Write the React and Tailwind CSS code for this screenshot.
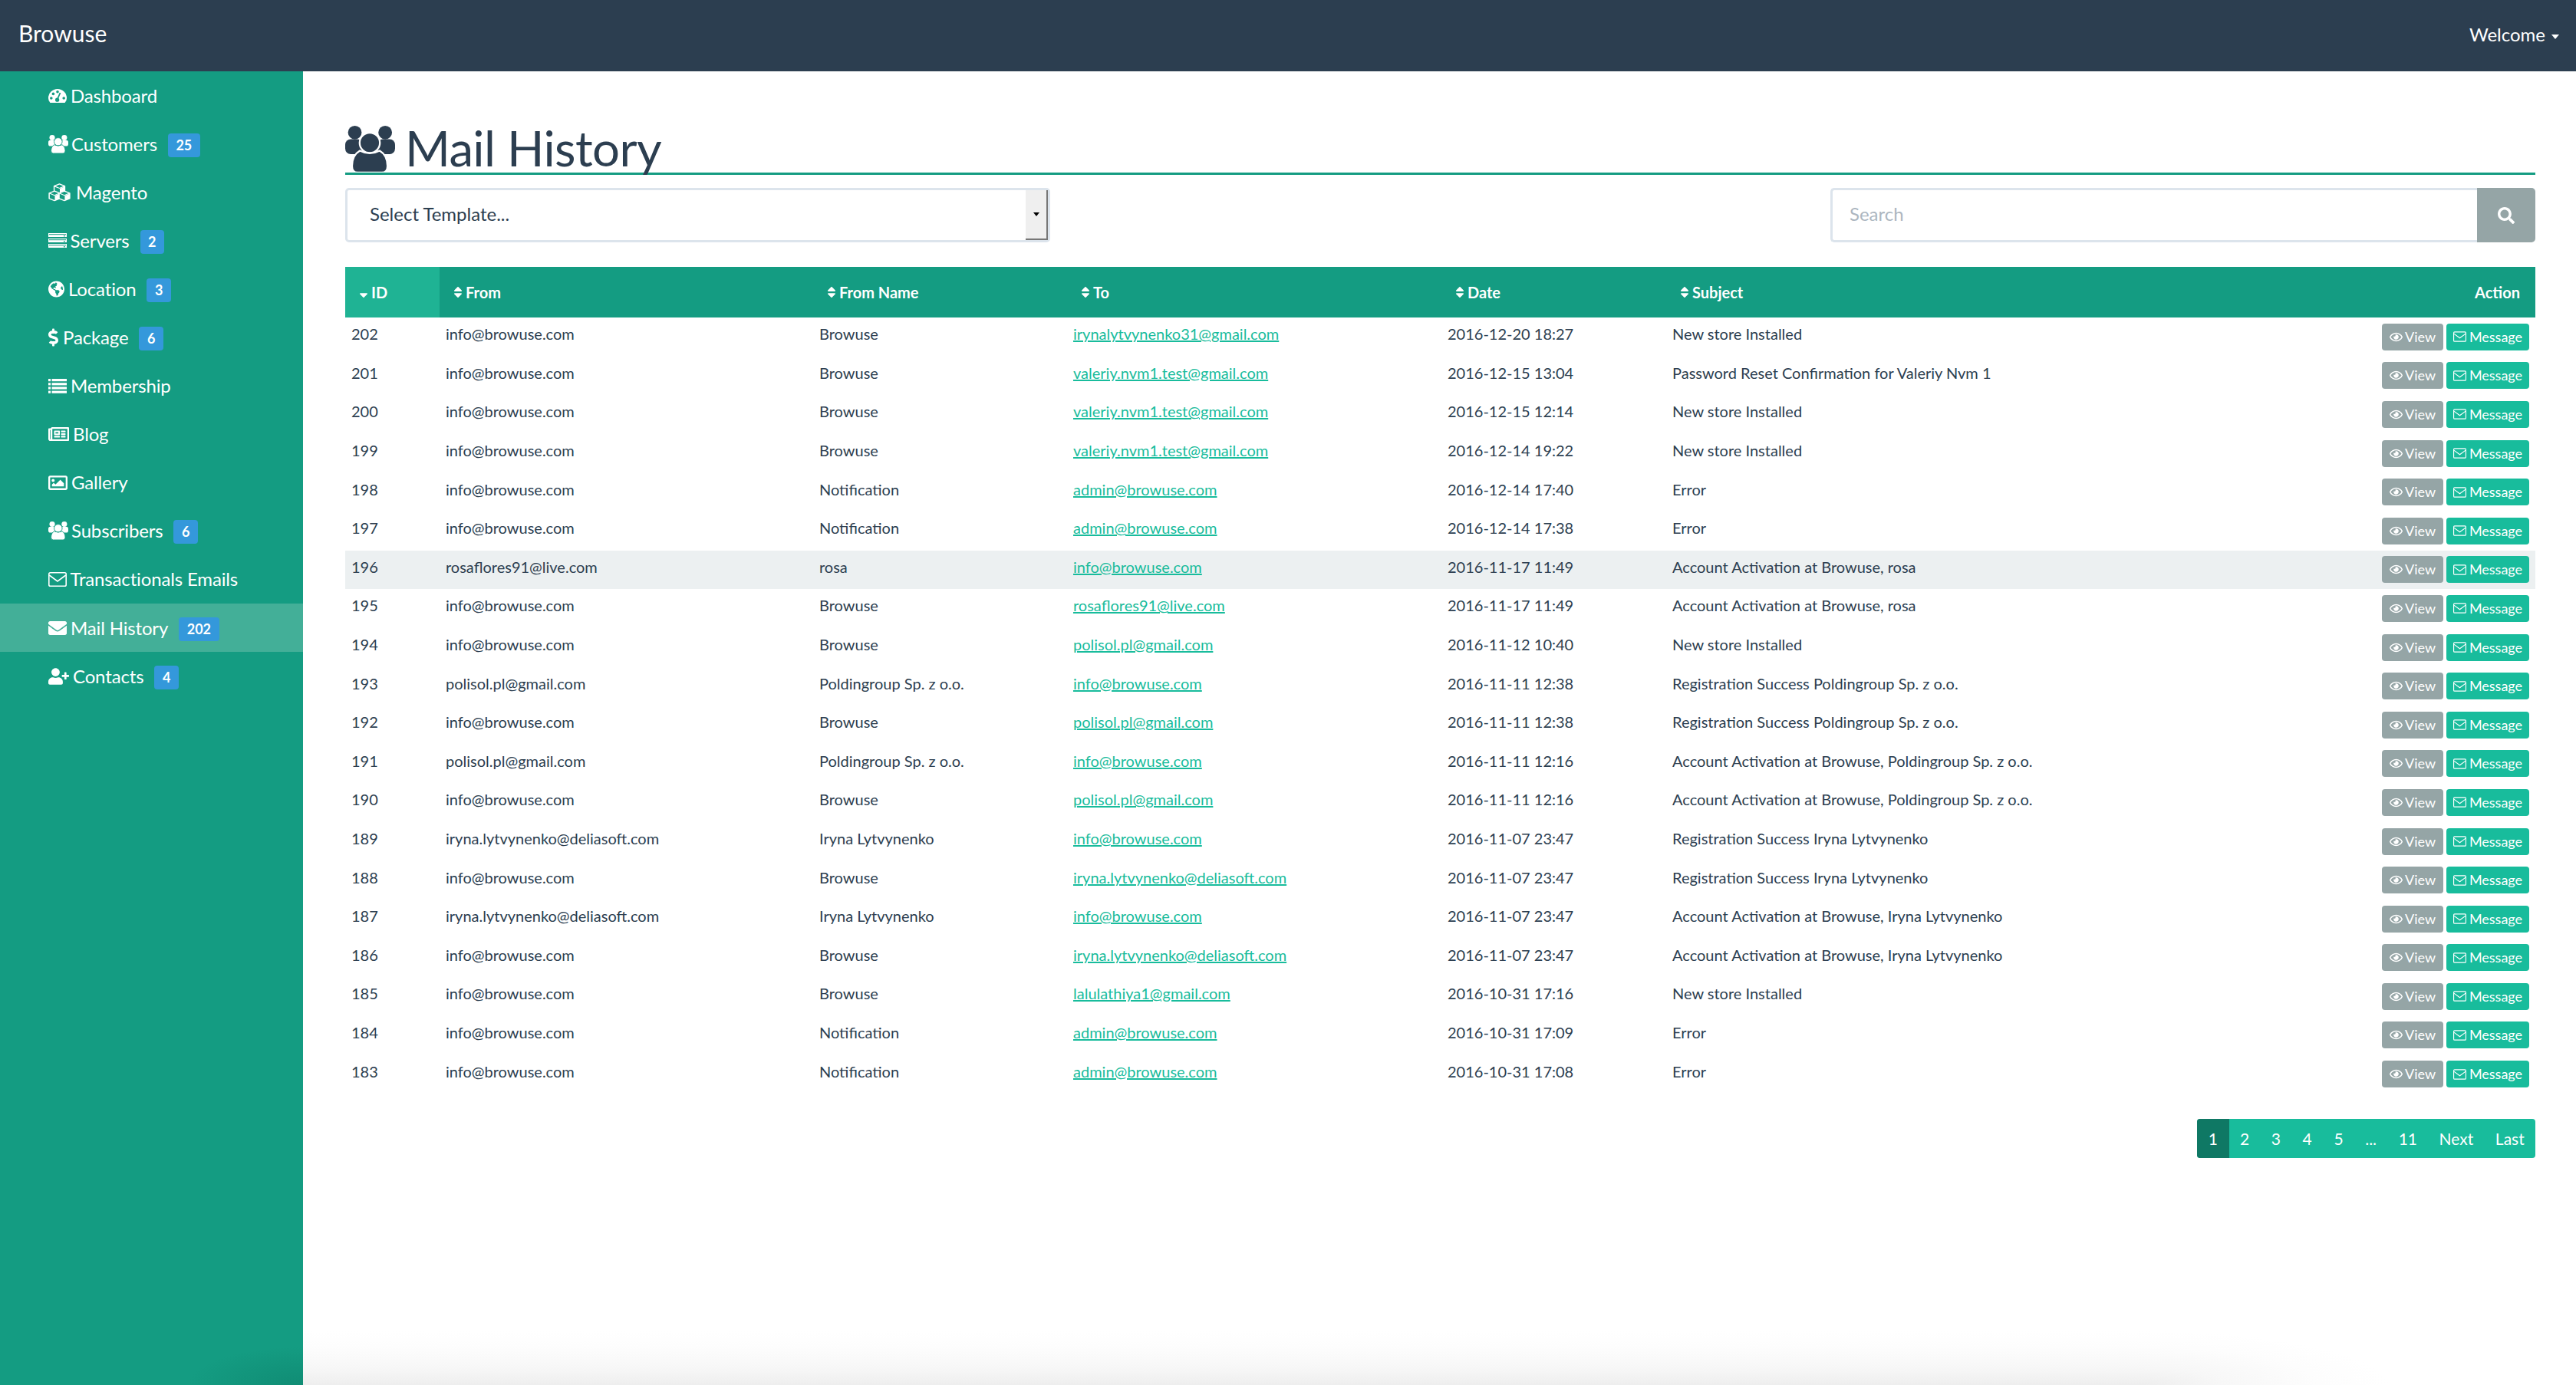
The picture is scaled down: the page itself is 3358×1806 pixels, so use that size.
import React from "react";
import {
  FaGlobeAmericas, FaDollarSign, FaRegNewspaper, FaRegImage, FaEnvelope, FaUserPlus, FaRegEye,
  FaSearch, FaSort, FaSortDown,
} from "react-icons/fa";

// the font-awesome 4 glyphs that the fa5 set draws too differently
const GroupIcon = ({ className, gap }) => (
  <svg viewBox="30 35 197 186" className={`${className} fill-current`} preserveAspectRatio="none">
    <circle cx="68" cy="62" r="27" />
    <circle cx="188" cy="62" r="27" />
    <rect x="30" y="88" width="70" height="60" rx="22" />
    <rect x="157" y="88" width="70" height="60" rx="22" />
    <circle cx="127" cy="103" r="40" className={gap} strokeWidth="7" />
    <path
      d="M57 195 Q57 152 88 134 Q127 155 166 134 Q197 152 197 195 Q197 221 175 221 L79 221 Q57 221 57 195Z"
      className={gap}
      strokeWidth="7"
    />
  </svg>
);

const GaugeIcon = ({ className }) => (
  <svg viewBox="0 0 24 18" className={className}>
    <path d="M2.4 18 Q0 15.5 0 12 A12 12 0 0 1 24 12 Q24 15.5 21.6 18Z" fill="#fff" />
    <g fill="#149c82">
      <circle cx="3.8" cy="12" r="1.8" />
      <circle cx="6.4" cy="6.4" r="1.8" />
      <circle cx="12" cy="3.8" r="1.8" />
      <circle cx="20.2" cy="12" r="1.8" />
      <circle cx="11.6" cy="14.2" r="2.6" />
    </g>
    <path d="M11.6 14 L15.5 5" stroke="#149c82" strokeWidth="1.8" />
  </svg>
);

const CubesIcon = ({ className }) => {
  const cube = (x, y) => (
    <g transform={`translate(${x} ${y})`} key={`${x}-${y}`}>
      <path d="M7.5 0 L15 3 V10.5 L7.5 13.5 L0 10.5 V3Z" fill="#149c82" stroke="#fff" strokeWidth="1.6" strokeLinejoin="round" />
      <path d="M8 6.5 L15 3.5 V10.2 L8 13Z" fill="#fff" />
      <path d="M0.5 3.2 L7.5 6 L14.5 3.2" fill="none" stroke="#fff" strokeWidth="1.2" />
    </g>
  );
  return (
    <svg viewBox="-1 -1 31 26" className={className}>
      {[cube(7, 0), cube(0, 10), cube(14, 10)]}
    </svg>
  );
};

const ServerIcon = ({ className }) => (
  <svg viewBox="0 0 24 19" className={className}>
    {[0, 7, 14].map((y) => (
      <g key={y}>
        <rect y={y} width="24" height="5" fill="#fff" />
        <rect x="1" y={y + 1.2} width="22" height="1" fill="#149c82" />
        <rect x="20" y={y + 3} width="1.6" height="1.4" fill="#149c82" />
      </g>
    ))}
  </svg>
);

const ListIcon = ({ className }) => (
  <svg viewBox="0 0 24 19" className={className} fill="#fff">
    {[0, 5.2, 10.4, 15.6].map((y) => (
      <g key={y}>
        <rect y={y} width="3" height="3.2" />
        <rect x="4.5" y={y} width="19.5" height="3.2" />
      </g>
    ))}
  </svg>
);

const MailOutline = ({ className }) => (
  <svg viewBox="0 0 24 19" className={className} fill="none" stroke="currentColor" strokeWidth="1.6">
    <rect x="0.8" y="0.8" width="22.4" height="17.4" rx="1.8" />
    <path d="M1.2 4 L12 12 L22.8 4" />
  </svg>
);

const UsersIcon = ({ className }) => <GroupIcon className={className} gap="stroke-[#149c82]" />;

const menu = [
  { label: "Dashboard", icon: GaugeIcon, box: "w-[29px]", size: "w-[24px] h-[18px]" },
  { label: "Customers", icon: UsersIcon, box: "w-[30px]", size: "w-[26px] h-[24px]", badge: 25 },
  { label: "Magento", icon: CubesIcon, box: "w-[36px]", size: "w-[29px] h-[24px]" },
  { label: "Servers", icon: ServerIcon, box: "w-[28.5px]", size: "w-[24px] h-[19px]", badge: 2 },
  { label: "Location", icon: FaGlobeAmericas, box: "w-[26px]", size: "w-[21px] h-[22px]", badge: 3 },
  { label: "Package", icon: FaDollarSign, box: "w-[19px]", size: "w-[13px] h-[24px]", badge: 6 },
  { label: "Membership", icon: ListIcon, box: "w-[29px]", size: "w-[24px] h-[19px]" },
  { label: "Blog", icon: FaRegNewspaper, box: "w-[32px]", size: "w-[27px] h-[24px]" },
  { label: "Gallery", icon: FaRegImage, box: "w-[30px]", size: "w-[25px] h-[25px]" },
  { label: "Subscribers", icon: UsersIcon, box: "w-[30px]", size: "w-[26px] h-[24px]", badge: 6 },
  { label: "Transactionals Emails", icon: MailOutline, box: "w-[28.5px]", size: "w-[24px] h-[19px]" },
  { label: "Mail History", icon: FaEnvelope, box: "w-[29px]", size: "w-[24px] h-[24px]", badge: 202, active: true },
  { label: "Contacts", icon: FaUserPlus, box: "w-[32px]", size: "w-[27px] h-[22px]", badge: 4 },
];

const NEW_STORE = "New store Installed";
const rows = [
  [202, "info@browuse.com", "Browuse", "irynalytvynenko31@gmail.com", "2016-12-20 18:27", NEW_STORE],
  [201, "info@browuse.com", "Browuse", "valeriy.nvm1.test@gmail.com", "2016-12-15 13:04", "Password Reset Confirmation for Valeriy Nvm 1"],
  [200, "info@browuse.com", "Browuse", "valeriy.nvm1.test@gmail.com", "2016-12-15 12:14", NEW_STORE],
  [199, "info@browuse.com", "Browuse", "valeriy.nvm1.test@gmail.com", "2016-12-14 19:22", NEW_STORE],
  [198, "info@browuse.com", "Notification", "admin@browuse.com", "2016-12-14 17:40", "Error"],
  [197, "info@browuse.com", "Notification", "admin@browuse.com", "2016-12-14 17:38", "Error"],
  [196, "rosaflores91@live.com", "rosa", "info@browuse.com", "2016-11-17 11:49", "Account Activation at Browuse, rosa"],
  [195, "info@browuse.com", "Browuse", "rosaflores91@live.com", "2016-11-17 11:49", "Account Activation at Browuse, rosa"],
  [194, "info@browuse.com", "Browuse", "polisol.pl@gmail.com", "2016-11-12 10:40", NEW_STORE],
  [193, "polisol.pl@gmail.com", "Poldingroup Sp. z o.o.", "info@browuse.com", "2016-11-11 12:38", "Registration Success Poldingroup Sp. z o.o."],
  [192, "info@browuse.com", "Browuse", "polisol.pl@gmail.com", "2016-11-11 12:38", "Registration Success Poldingroup Sp. z o.o."],
  [191, "polisol.pl@gmail.com", "Poldingroup Sp. z o.o.", "info@browuse.com", "2016-11-11 12:16", "Account Activation at Browuse, Poldingroup Sp. z o.o."],
  [190, "info@browuse.com", "Browuse", "polisol.pl@gmail.com", "2016-11-11 12:16", "Account Activation at Browuse, Poldingroup Sp. z o.o."],
  [189, "iryna.lytvynenko@deliasoft.com", "Iryna Lytvynenko", "info@browuse.com", "2016-11-07 23:47", "Registration Success Iryna Lytvynenko"],
  [188, "info@browuse.com", "Browuse", "iryna.lytvynenko@deliasoft.com", "2016-11-07 23:47", "Registration Success Iryna Lytvynenko"],
  [187, "iryna.lytvynenko@deliasoft.com", "Iryna Lytvynenko", "info@browuse.com", "2016-11-07 23:47", "Account Activation at Browuse, Iryna Lytvynenko"],
  [186, "info@browuse.com", "Browuse", "iryna.lytvynenko@deliasoft.com", "2016-11-07 23:47", "Account Activation at Browuse, Iryna Lytvynenko"],
  [185, "info@browuse.com", "Browuse", "lalulathiya1@gmail.com", "2016-10-31 17:16", NEW_STORE],
  [184, "info@browuse.com", "Notification", "admin@browuse.com", "2016-10-31 17:09", "Error"],
  [183, "info@browuse.com", "Notification", "admin@browuse.com", "2016-10-31 17:08", "Error"],
];

const columns = [
  { label: "From", width: "w-[487px]" },
  { label: "From Name", width: "w-[331px]" },
  { label: "To", width: "w-[488px]" },
  { label: "Date", width: "w-[293px]" },
  { label: "Subject", width: "" },
];

const pages = ["2", "3", "4", "5", "...", "11", "Next", "Last"];

export default function App() {
  return (
    <div className="min-h-[1806px] flex flex-col bg-white font-['Lato','Open_Sans',sans-serif] text-[#2c3e50]">
      <header className="h-[93px] bg-[#2c3e50] flex items-center justify-between pl-6 pr-[22px] pb-[4px] text-white">
        <span className="text-[30px] -mt-[2px]">Browuse</span>
        <span className="flex items-center gap-[8px] text-[24px]">
          Welcome
          <span className="mt-[6px] border-x-[5.5px] border-t-[6px] border-x-transparent border-t-white" />
        </span>
      </header>

      <div className="flex flex-1">
        <aside className="w-[395px] bg-[#149c82] bg-[radial-gradient(ellipse_150px_50px_at_100%_100%,#108c74,transparent)] text-white">
          {menu.map((m) => (
            <a
              key={m.label}
              className={`h-[63.1px] pl-[63px] flex items-center text-[24px] tracking-[-0.15px] ${m.active ? "bg-[#43af98]" : ""}`}
            >
              <span className={`${m.box} shrink-0`}>
                <m.icon className={`${m.size} block`} />
              </span>
              <span>{m.label}</span>
              {m.badge && (
                <span className="ml-[14px] mt-[3px] h-[31px] px-[10.5px] flex items-center rounded-[4px] bg-[#3498db] text-[18px] font-bold tracking-normal">
                  {m.badge}
                </span>
              )}
            </a>
          ))}
        </aside>

        <main className="flex-1 pl-[55px] pr-[53px] pt-[64px] [background:linear-gradient(to_top,#eeeeee,#f7f7f7_22px,#fdfdfd_50px,transparent_70px)_left_bottom/2400px_70px_no-repeat,radial-gradient(ellipse_100%_100%_at_0%_100%,#eeeeee,#f7f7f7_31%,#fdfdfd_71%,transparent)_2400px_bottom/320px_70px_no-repeat]">
          <h1 className="h-[71px] flex items-end gap-[13px] border-b-[3px] border-[#149c82] text-[63.5px] leading-[71px] tracking-[-0.6px]">
            <GroupIcon className="w-[65px] h-[61px] mb-[0px]" gap="stroke-white" />
            <span className="-mb-[3px]">Mail History</span>
          </h1>

          <div className="mt-[17px] flex justify-between">
            <div className="w-[919px] h-[71px] flex rounded-[5px] border-[3px] border-[#dce4ec] text-[24px]">
              <span className="flex-1 flex items-center pl-[29px] pb-[3px]">Select Template...</span>
              <span className="w-[29px] flex items-center justify-center bg-[#efefef] border-r-2 border-b-2 border-[#777777]">
                <span className="border-x-[4px] border-t-[5px] border-x-transparent border-t-black" />
              </span>
            </div>
            <div className="w-[919px] h-[71px] flex">
              <div className="flex-1 flex items-center pl-[22px] pb-[3px] border-y-[3px] border-l-[3px] border-[#dce4ec] rounded-l-[5px] text-[24px] text-[#acb6c0]">
                Search
              </div>
              <span className="w-[76px] flex items-center justify-center bg-[#95a5a6] rounded-r-[5px] text-white text-[22px]">
                <FaSearch />
              </span>
            </div>
          </div>

          <table className="mt-[32px] w-full table-fixed border-collapse text-[20px]">
            <thead>
              <tr className="h-[66px] bg-[#149c82] text-white text-left font-bold">
                <th className="w-[123px] pl-[18px] bg-[#1fb394]">
                  <span className="flex items-center gap-[4px]"><FaSortDown className="w-[12px] h-[18px]" />ID</span>
                </th>
                {columns.map((c) => (
                  <th key={c.label} className={`${c.width} pl-[18px]`}>
                    <span className="flex items-center gap-[4px]"><FaSort className="w-[12px] h-[18px]" />{c.label}</span>
                  </th>
                ))}
                <th className="w-[500px] pr-[20px] text-right">Action</th>
              </tr>
            </thead>
            <tbody>
              {rows.map((r) => (
                <tr key={r[0]} className={`h-[50.6px] ${r[0] === 196 ? "bg-[#ecf0f1]" : ""}`}>
                  <td className="pl-[8px] pb-[8px]">{r[0]}</td>
                  <td className="pl-[8px] pb-[8px]">{r[1]}</td>
                  <td className="pl-[8px] pb-[8px]">{r[2]}</td>
                  <td className="pl-[8px] pb-[8px]"><a className="text-[#18bc9c] underline">{r[3]}</a></td>
                  <td className="pl-[8px] pb-[8px]">{r[4]}</td>
                  <td className="pl-[8px] pb-[8px] whitespace-nowrap">{r[5]}</td>
                  <td className="pr-[8px]">
                    <div className="flex justify-end gap-[4px] text-[18px] text-white">
                      <span className="h-[35px] w-[80px] flex items-center justify-center gap-[3px] rounded-[4px] bg-[#95a5a6]">
                        <FaRegEye className="text-[17px]" />View
                      </span>
                      <span className="h-[35px] w-[108px] flex items-center justify-center gap-[4px] rounded-[4px] bg-[#18bc9c]">
                        <MailOutline className="w-[17px] h-[14px]" />Message
                      </span>
                    </div>
                  </td>
                </tr>
              ))}
            </tbody>
          </table>

          <div className="mt-[33px] flex justify-end">
            <div className="h-[51px] flex items-center rounded-[4px] overflow-hidden bg-[#18bc9c] text-white text-[21px]">
              <span className="h-full w-[42px] flex items-center justify-center bg-[#0f7864]">1</span>
              {pages.map((p) => (
                <span key={p} className="h-full px-[14.3px] flex items-center">{p}</span>
              ))}
            </div>
          </div>
        </main>
      </div>
    </div>
  );
}
